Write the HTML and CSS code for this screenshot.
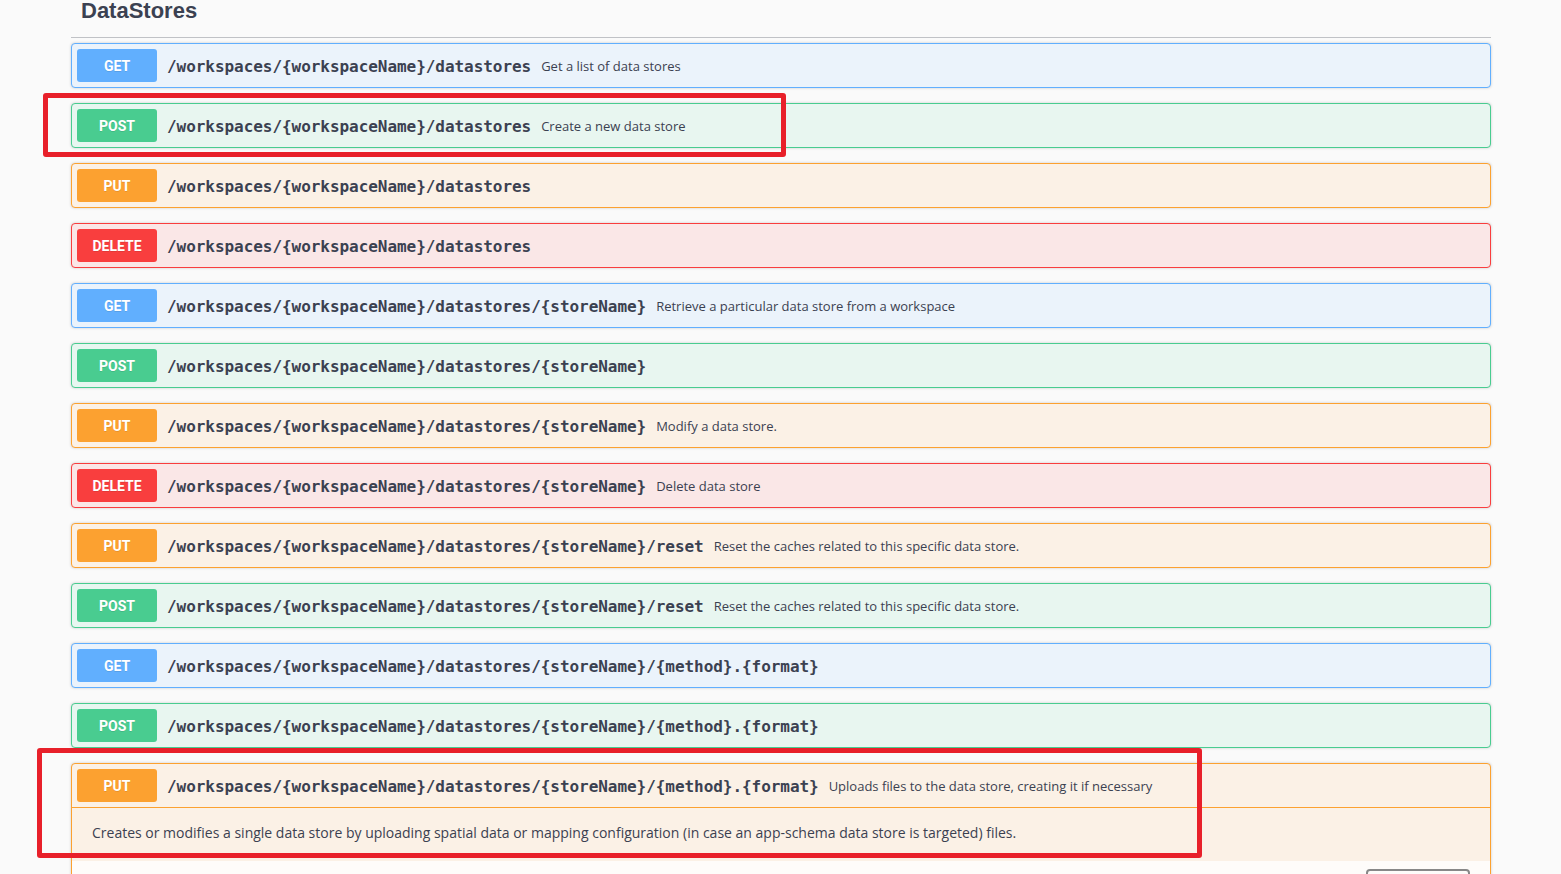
FILE: index.html
```html
<!DOCTYPE html>
<html lang="en">
<head>
<meta charset="utf-8">
<title>DataStores</title>
<link rel="stylesheet" href="styles.css">
</head>
<body>
<div class="page">
  <section class="tag-section">
    <h3 class="tag-title">DataStores</h3>
    <div class="ops">
      <div class="opblock get"><div class="summary"><span class="method">GET</span><span class="path">/workspaces/{workspaceName}/datastores</span><span class="desc">Get a list of data stores</span></div></div>
      <div class="opblock post"><div class="summary"><span class="method">POST</span><span class="path">/workspaces/{workspaceName}/datastores</span><span class="desc">Create a new data store</span></div></div>
      <div class="opblock put"><div class="summary"><span class="method">PUT</span><span class="path">/workspaces/{workspaceName}/datastores</span></div></div>
      <div class="opblock delete"><div class="summary"><span class="method">DELETE</span><span class="path">/workspaces/{workspaceName}/datastores</span></div></div>
      <div class="opblock get"><div class="summary"><span class="method">GET</span><span class="path">/workspaces/{workspaceName}/datastores/{storeName}</span><span class="desc">Retrieve a particular data store from a workspace</span></div></div>
      <div class="opblock post"><div class="summary"><span class="method">POST</span><span class="path">/workspaces/{workspaceName}/datastores/{storeName}</span></div></div>
      <div class="opblock put"><div class="summary"><span class="method">PUT</span><span class="path">/workspaces/{workspaceName}/datastores/{storeName}</span><span class="desc">Modify a data store.</span></div></div>
      <div class="opblock delete"><div class="summary"><span class="method">DELETE</span><span class="path">/workspaces/{workspaceName}/datastores/{storeName}</span><span class="desc">Delete data store</span></div></div>
      <div class="opblock put"><div class="summary"><span class="method">PUT</span><span class="path">/workspaces/{workspaceName}/datastores/{storeName}/reset</span><span class="desc">Reset the caches related to this specific data store.</span></div></div>
      <div class="opblock post"><div class="summary"><span class="method">POST</span><span class="path">/workspaces/{workspaceName}/datastores/{storeName}/reset</span><span class="desc">Reset the caches related to this specific data store.</span></div></div>
      <div class="opblock get"><div class="summary"><span class="method">GET</span><span class="path">/workspaces/{workspaceName}/datastores/{storeName}/{method}.{format}</span></div></div>
      <div class="opblock post"><div class="summary"><span class="method">POST</span><span class="path">/workspaces/{workspaceName}/datastores/{storeName}/{method}.{format}</span></div></div>
      <div class="opblock put open">
        <div class="summary"><span class="method">PUT</span><span class="path">/workspaces/{workspaceName}/datastores/{storeName}/{method}.{format}</span><span class="desc">Uploads files to the data store, creating it if necessary</span></div>
        <div class="op-body">
          <div class="op-description"><p>Creates or modifies a single data store by uploading spatial data or mapping configuration (in case an app-schema data store is targeted) files.</p></div>
          <div class="section-header"><button class="try-btn" aria-label="Try it out"></button></div>
        </div>
      </div>
    </div>
  </section>
</div>
<div class="annot annot-1"></div>
<div class="annot annot-2"></div>
</body>
</html>
```

FILE: styles.css
```css
html, body {
  margin: 0;
  padding: 0;
  background: #fafafa;
  height: 874px;
  overflow: hidden;
}

.page {
  padding: 0 70px 0 71px;
  width: 1420px;
  color: #3b4151;
}

.tag-title {
  margin: 0 0 5px;
  padding: 0 20px 16px 10px;
  font-family: "Liberation Sans", Arial, sans-serif;
  font-weight: 700;
  font-size: 22px;
  line-height: 21px;
  color: #3b4151;
  border-bottom: 1px solid rgba(59, 65, 81, 0.3);
}

.ops {
  display: flex;
  flex-direction: column;
  gap: 15px;
}

.opblock {
  border: 1px solid #000;
  border-radius: 4px;
  box-shadow: 0 0 3px rgba(0, 0, 0, 0.19);
}

.summary {
  display: flex;
  align-items: center;
  padding: 5px;
  height: 33px;
}

.method {
  flex: none;
  width: 80px;
  height: 33px;
  border-radius: 3px;
  display: flex;
  align-items: center;
  justify-content: center;
  font-family: Roboto, "Liberation Sans", sans-serif;
  font-weight: 700;
  font-size: 14px;
  color: #fff;
  text-shadow: 0 1px 0 rgba(0, 0, 0, 0.1);
}

.path {
  padding: 2px 10px 0;
  font-family: "DejaVu Sans Mono", "Liberation Mono", monospace;
  font-weight: 600;
  font-size: 16px;
  letter-spacing: -0.05px;
  color: #3b4151;
  white-space: nowrap;
}

.desc {
  font-family: "Open Sans", "Noto Sans", sans-serif;
  font-size: 13px;
  color: #3b4151;
  white-space: nowrap;
}

.get { background: #ebf3fb; border-color: #61affe; }
.get .method { background: #61affe; }
.post { background: #e8f6f0; border-color: #49cc90; }
.post .method { background: #49cc90; }
.put { background: #fbf1e6; border-color: #fca130; }
.put .method { background: #fca130; }
.delete { background: #fae7e7; border-color: #f93e3e; }
.delete .method { background: #f93e3e; }

.open .summary {
  border-bottom: 1px solid #fca130;
}

.op-description {
  padding: 15px 20px 19px;
}

.op-description p {
  margin: 0;
  font-family: "Open Sans", "Noto Sans", sans-serif;
  font-size: 14px;
  line-height: 19px;
  color: #3b4151;
}

.section-header {
  background: rgba(255, 255, 255, 0.8);
  padding: 8px 20px;
  min-height: 50px;
  display: flex;
  justify-content: flex-end;
  align-items: flex-start;
}

.try-btn {
  width: 104px;
  height: 34px;
  border: 2px solid #888;
  border-radius: 4px;
  background: transparent;
}

.annot {
  position: absolute;
  border: 5px solid #e8202a;
  border-radius: 3px;
  box-sizing: border-box;
}

.annot-1 {
  left: 43px;
  top: 93px;
  width: 743px;
  height: 64px;
}

.annot-2 {
  left: 37px;
  top: 748px;
  width: 1165px;
  height: 110px;
}
```
